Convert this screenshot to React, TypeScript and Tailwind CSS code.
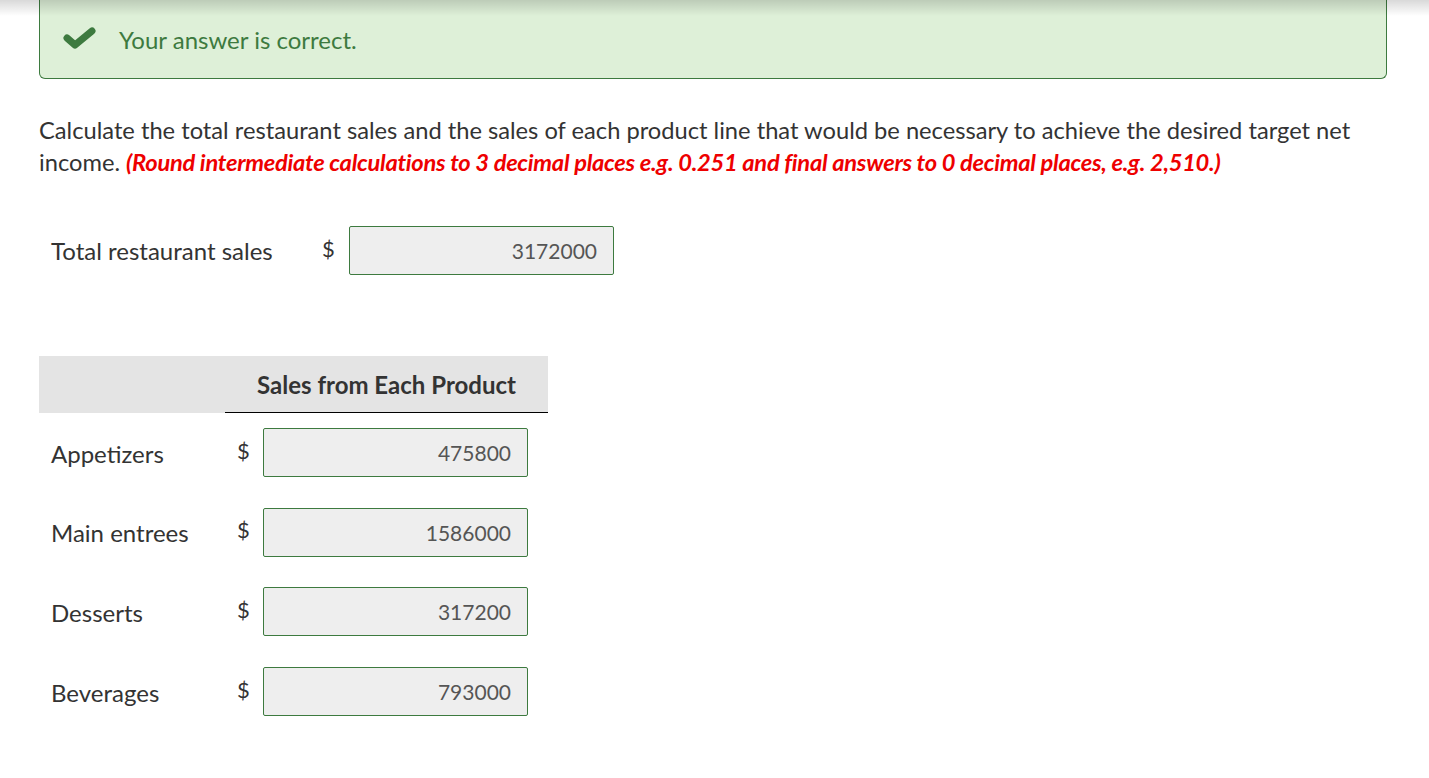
import { useState } from 'react'

const rows = [
  { label: 'Appetizers', value: '475800' },
  { label: 'Main entrees', value: '1586000' },
  { label: 'Desserts', value: '317200' },
  { label: 'Beverages', value: '793000' },
]

function CheckIcon() {
  return (
    <svg width="33" height="22" viewBox="0 0 33 22" className="-mt-[4px] shrink-0">
      <path d="M4 11 L12 18 L29 4" fill="none" stroke="#3d7a3f" strokeWidth="7" strokeLinecap="round" strokeLinejoin="round" />
    </svg>
  )
}

function AnswerBox({ value }: { value: string }) {
  const [v, setV] = useState(value)
  return (
    <input
      className="h-[49px] w-[265px] rounded-[2px] border border-[#3d7a3f] bg-[#eeeeee] px-4 text-right text-[21px] text-[#555555] outline-none"
      value={v}
      onChange={(e) => setV(e.target.value)}
    />
  )
}

export default function App() {
  return (
    <div className="relative min-h-screen bg-white text-[#333333]" style={{ fontFamily: 'Lato, "Noto Sans", sans-serif' }}>
      <div className="pointer-events-none absolute inset-x-0 top-0 h-[16px] bg-gradient-to-b from-black/15 to-transparent" />

      <div className="px-[39px] pr-[42px]">
        <div className="flex h-[79px] items-center gap-[23px] rounded-b-[6px] border border-t-0 border-[#3d7a3f] bg-[#def0d8] pl-[23px] pt-[2px]">
          <CheckIcon />
          <span className="text-[24px] text-[#3d7a3f]">Your answer is correct.</span>
        </div>

        <p className="mt-[35px] text-[23.7px] leading-[32px] text-[#333333]">
          Calculate the total restaurant sales and the sales of each product line that would be necessary to achieve the
          desired target net income.{' '}
          <span className="font-bold italic tracking-[-0.012em] text-[#ee0000]">
            (Round intermediate calculations to 3 decimal places e.g. 0.251 and final answers to 0 decimal places, e.g.
            2,510.)
          </span>
        </p>

        <div className="mt-[48px] flex items-center pl-[12px]">
          <span className="w-[271px] text-[24px]">Total restaurant sales</span>
          <span className="-mt-[5px] w-[27px] text-[22px]">$</span>
          <AnswerBox value="3172000" />
        </div>

        <div className="mt-[81px] w-[509px]">
          <div className="grid h-[57px] grid-cols-[186px_323px] bg-[#e4e4e4]">
            <div />
            <div className="flex items-center justify-center border-b border-black pt-[1px] text-[24px] font-bold text-[#333333]">
              Sales from Each Product
            </div>
          </div>
          {rows.map((row) => (
            <div key={row.label} className="grid h-[79.6px] grid-cols-[186px_323px] items-center">
              <span className="pl-[12px] pt-[2px] text-[24px]">{row.label}</span>
              <div className="flex items-center pl-[12px]">
                <span className="-mt-[5px] w-[26px] text-[22px]">$</span>
                <AnswerBox value={row.value} />
              </div>
            </div>
          ))}
        </div>
      </div>
    </div>
  )
}
